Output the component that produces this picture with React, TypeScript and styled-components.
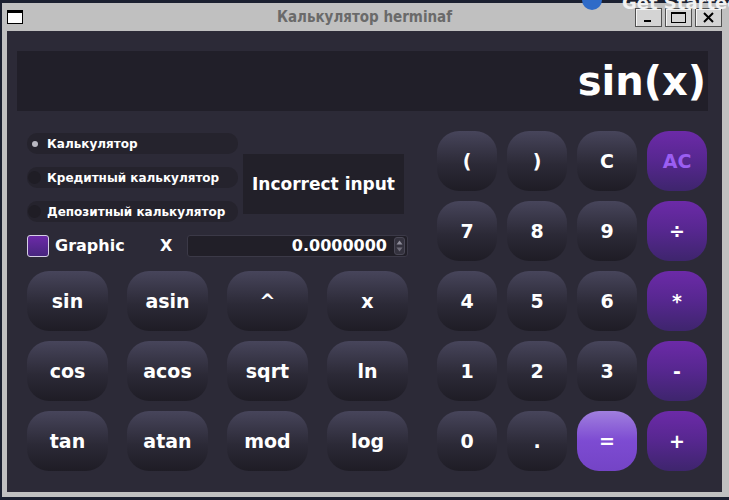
import React from "react";
import styled, { createGlobalStyle } from "styled-components";

const GlobalStyle = createGlobalStyle`
  html, body {
    margin: 0;
    padding: 0;
    background: #1b2030;
  }
  * {
    box-sizing: border-box;
  }
`;

const Desktop = styled.div`
  position: relative;
  width: 729px;
  height: 500px;
  padding: 3px 0 3px 2px;
  overflow: hidden;
  font-family: "DejaVu Sans", "Liberation Sans", sans-serif;
`;

const DesktopLabel = styled.div`
  position: absolute;
  top: -7px;
  left: 582px;
  display: flex;
  align-items: center;
  gap: 20px;
  color: #f2f2f2;
  font-weight: bold;
  font-size: 18px;
  line-height: 20px;
  white-space: nowrap;
  z-index: 2;
`;

const DesktopIcon = styled.div`
  width: 20px;
  height: 20px;
  margin-top: -6px;
  border-radius: 50%;
  background: #2f6bc8;
`;

const Window = styled.div`
  display: flex;
  flex-direction: column;
  width: 727px;
  height: 494px;
  background: #c0c0c0;
`;

const TitleBar = styled.div`
  display: grid;
  grid-template-columns: 1fr auto 1fr;
  align-items: center;
  height: 28px;
  padding: 0 7px 0 5px;
`;

const TitleText = styled.div`
  color: #6a6a6a;
  font-family: "DejaVu Sans Condensed", "DejaVu Sans", sans-serif;
  font-stretch: condensed;
  font-weight: bold;
  font-size: 15px;
`;

const AppIcon = styled.div`
  width: 16px;
  height: 14px;
  background: #fff;
  border: 1px solid #000;
  border-top-width: 3px;
`;

const WinButtons = styled.div`
  display: flex;
  justify-content: flex-end;
  gap: 3px;
`;

const WinButton = styled.div`
  width: 27px;
  height: 19px;
  display: flex;
  align-items: center;
  justify-content: center;
  background: #d4d4d4;
  border: 1px solid #505050;
  box-shadow: inset 1px 1px 0 #f4f4f4;
`;

const Content = styled.div`
  flex: 1;
  margin: 0 7px 5px 5px;
  background: #2c2a37;
  padding: 20px 14px 0 10px;
`;

const Display = styled.div`
  height: 60px;
  background: #211f29;
  color: #fff;
  font-weight: bold;
  font-size: 40px;
  line-height: 60px;
  text-align: right;
  padding-right: 2px;
`;

const Body = styled.div`
  display: flex;
  margin-top: 20px;
  padding-left: 10px;
  gap: 29px;
`;

const LeftPanel = styled.div`
  width: 381px;
  display: flex;
  flex-direction: column;
  padding-top: 2px;
`;

const ModeRow = styled.div`
  display: flex;
  gap: 5px;
  align-items: flex-start;
`;

const RadioList = styled.div`
  width: 211px;
  display: flex;
  flex-direction: column;
  gap: 13px;
`;

const RadioPill = styled.div`
  height: 21px;
  display: flex;
  align-items: center;
  padding-left: 1px;
  background: #25232d;
  border-radius: 10px;
  color: #fff;
  font-weight: bold;
  font-size: 12px;
`;

const RadioDot = styled.div<{ $checked?: boolean }>`
  width: 13px;
  height: 13px;
  border-radius: 50%;
  margin-right: 6px;
  display: flex;
  align-items: center;
  justify-content: center;
  background: ${(p) => (p.$checked ? "transparent" : "#1f1d25")};
  &::after {
    content: "";
    width: 6px;
    height: 6px;
    border-radius: 50%;
    background: #b9b8c2;
    display: ${(p) => (p.$checked ? "block" : "none")};
  }
`;

const ErrorBox = styled.div`
  width: 161px;
  height: 60px;
  margin-top: 21px;
  background: #222029;
  color: #fff;
  font-weight: bold;
  font-size: 17px;
  display: flex;
  align-items: center;
  justify-content: center;
`;

const OptionRow = styled.div`
  display: flex;
  align-items: center;
  height: 23px;
  margin-top: 12px;
`;

const CheckGroup = styled.div`
  width: 133px;
  display: flex;
  align-items: center;
  gap: 6px;
  color: #fff;
  font-weight: bold;
  font-size: 16px;
`;

const CheckBox = styled.div`
  width: 22px;
  height: 22px;
  border-radius: 3px;
  border: 1px solid #d6cfe6;
  background: linear-gradient(#6c2aa8, #47257e);
`;

const XLabel = styled.div`
  width: 27px;
  color: #fff;
  font-weight: bold;
  font-size: 16px;
`;

const SpinBox = styled.div`
  flex: 1;
  height: 22px;
  display: flex;
  align-items: center;
  justify-content: flex-end;
  gap: 7px;
  padding-right: 2px;
  background: #211f28;
  border: 1px solid #3b3947;
  border-radius: 3px;
  color: #fff;
  font-weight: bold;
  font-size: 16px;
`;

const SpinArrows = styled.div`
  width: 11px;
  height: 18px;
  border: 1px solid #4a4856;
  border-radius: 3px;
  background: #34323e;
  display: flex;
  align-items: center;
  justify-content: center;
`;

const FuncGrid = styled.div`
  display: grid;
  grid-template-columns: repeat(4, 81px);
  grid-auto-rows: 60px;
  column-gap: 19px;
  row-gap: 10px;
  margin-top: 14px;
`;

const KeyPad = styled.div`
  display: grid;
  grid-template-columns: repeat(4, 60px);
  grid-auto-rows: 60px;
  gap: 10px;
`;

type Tone = "dark" | "purple" | "accent";

const backgrounds: Record<Tone, string> = {
  dark: "linear-gradient(#47455b, #2c2a37 55%, #1e1c25)",
  purple: "linear-gradient(#6c2aa8, #56278f 50%, #3e256d)",
  accent: "linear-gradient(#a07fde, #7d4bd2 50%, #7444c6)",
};

const Key = styled.div<{ $tone?: Tone; $color?: string }>`
  display: flex;
  align-items: center;
  justify-content: center;
  border-radius: 22px;
  background: ${(p) => backgrounds[p.$tone || "dark"]};
  color: ${(p) => p.$color || "#fff"};
  font-weight: bold;
  font-size: 19px;
`;

const funcKeys = ["sin", "asin", "^", "x", "cos", "acos", "sqrt", "ln", "tan", "atan", "mod", "log"];

const padKeys: { label: string; tone?: Tone; color?: string }[] = [
  { label: "(" },
  { label: ")" },
  { label: "C" },
  { label: "AC", tone: "purple", color: "#9b5ef2" },
  { label: "7" },
  { label: "8" },
  { label: "9" },
  { label: "÷", tone: "purple" },
  { label: "4" },
  { label: "5" },
  { label: "6" },
  { label: "*", tone: "purple" },
  { label: "1" },
  { label: "2" },
  { label: "3" },
  { label: "-", tone: "purple" },
  { label: "0" },
  { label: "." },
  { label: "=", tone: "accent" },
  { label: "+", tone: "purple" },
];

const modes = ["Калькулятор", "Кредитный калькулятор", "Депозитный калькулятор"];

export default function App() {
  return (
    <>
      <GlobalStyle />
      <Desktop>
        <DesktopLabel>
          <DesktopIcon />
          Get Started wi
        </DesktopLabel>
        <Window>
          <TitleBar>
            <AppIcon />
            <TitleText>Калькулятор herminaf</TitleText>
            <WinButtons>
              <WinButton>
                <svg width="11" height="11" viewBox="0 0 11 11">
                  <rect x="1" y="8" width="7" height="2" fill="#000" />
                </svg>
              </WinButton>
              <WinButton>
                <svg width="15" height="11" viewBox="0 0 15 11">
                  <rect x="0.5" y="0.5" width="14" height="10" fill="none" stroke="#000" />
                  <rect x="0" y="0" width="15" height="2" fill="#000" />
                </svg>
              </WinButton>
              <WinButton>
                <svg width="11" height="11" viewBox="0 0 11 11">
                  <path d="M1 1 L10 10 M10 1 L1 10" stroke="#000" strokeWidth="2" />
                </svg>
              </WinButton>
            </WinButtons>
          </TitleBar>
          <Content>
            <Display>sin(x)</Display>
            <Body>
              <LeftPanel>
                <ModeRow>
                  <RadioList>
                    {modes.map((m, i) => (
                      <RadioPill key={m}>
                        <RadioDot $checked={i === 0} />
                        {m}
                      </RadioPill>
                    ))}
                  </RadioList>
                  <ErrorBox>Incorrect input</ErrorBox>
                </ModeRow>
                <OptionRow>
                  <CheckGroup>
                    <CheckBox />
                    Graphic
                  </CheckGroup>
                  <XLabel>X</XLabel>
                  <SpinBox>
                    0.0000000
                    <SpinArrows>
                      <svg width="7" height="14" viewBox="0 0 7 14">
                        <path d="M0.5 5.5 L3.5 1.5 L6.5 5.5 Z" fill="#8e8c99" />
                        <path d="M0.5 8.5 L3.5 12.5 L6.5 8.5 Z" fill="#6e6c79" />
                      </svg>
                    </SpinArrows>
                  </SpinBox>
                </OptionRow>
                <FuncGrid>
                  {funcKeys.map((k) => (
                    <Key key={k}>{k}</Key>
                  ))}
                </FuncGrid>
              </LeftPanel>
              <KeyPad>
                {padKeys.map((k) => (
                  <Key key={k.label} $tone={k.tone} $color={k.color}>
                    {k.label}
                  </Key>
                ))}
              </KeyPad>
            </Body>
          </Content>
        </Window>
      </Desktop>
    </>
  );
}
